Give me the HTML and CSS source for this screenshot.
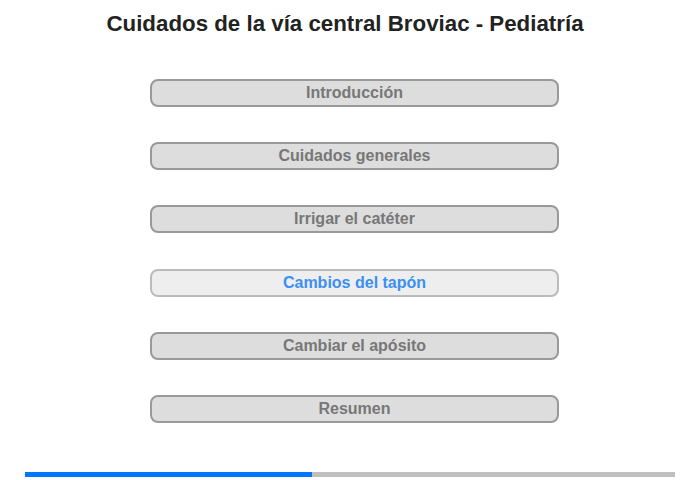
FILE: index.html
```html
<!DOCTYPE html>
<html lang="es">
<head>
  <meta charset="UTF-8">
  <title>Cuidados de la vía central Broviac - Pediatría</title>
  <link rel="stylesheet" href="styles.css">
</head>
<body>
  <h1 class="title">Cuidados de la vía central Broviac - Pediatría</h1>
  <div class="menu">
    <div class="item">Introducción</div>
    <div class="item">Cuidados generales</div>
    <div class="item">Irrigar el catéter</div>
    <div class="item current">Cambios del tapón</div>
    <div class="item">Cambiar el apósito</div>
    <div class="item">Resumen</div>
  </div>
  <div class="progress">
    <div class="progress-fill" style="width: 44.2%;"></div>
  </div>
</body>
</html>
```

FILE: styles.css
```css
body {
  margin: 0;
  width: 700px;
  height: 480px;
  font-family: "Liberation Sans", Arial, sans-serif;
  background: #fff;
}

.title {
  margin: 0;
  padding: 12px 10px 0 0;
  text-align: center;
  font-size: 22.3px;
  line-height: 24px;
  color: #222;
  font-weight: bold;
}

.menu {
  display: flex;
  flex-direction: column;
  gap: 35.2px;
  margin-top: 43px;
  padding-left: 150px;
}

.item {
  box-sizing: border-box;
  width: 409px;
  height: 28px;
  line-height: 24px;
  border: 2px solid #999;
  border-radius: 8px;
  background-color: #ddd;
  color: #777;
  font-size: 16px;
  font-weight: bold;
  text-align: center;
}

.item.current {
  background-color: #eee;
  border-color: #bbb;
  color: #3b8ff5;
}

.progress {
  margin: 49px 0 0 25px;
  width: 650px;
  height: 5px;
  background-color: #c0c0c0;
}

.progress-fill {
  height: 100%;
  background-color: #0078ff;
}
```
